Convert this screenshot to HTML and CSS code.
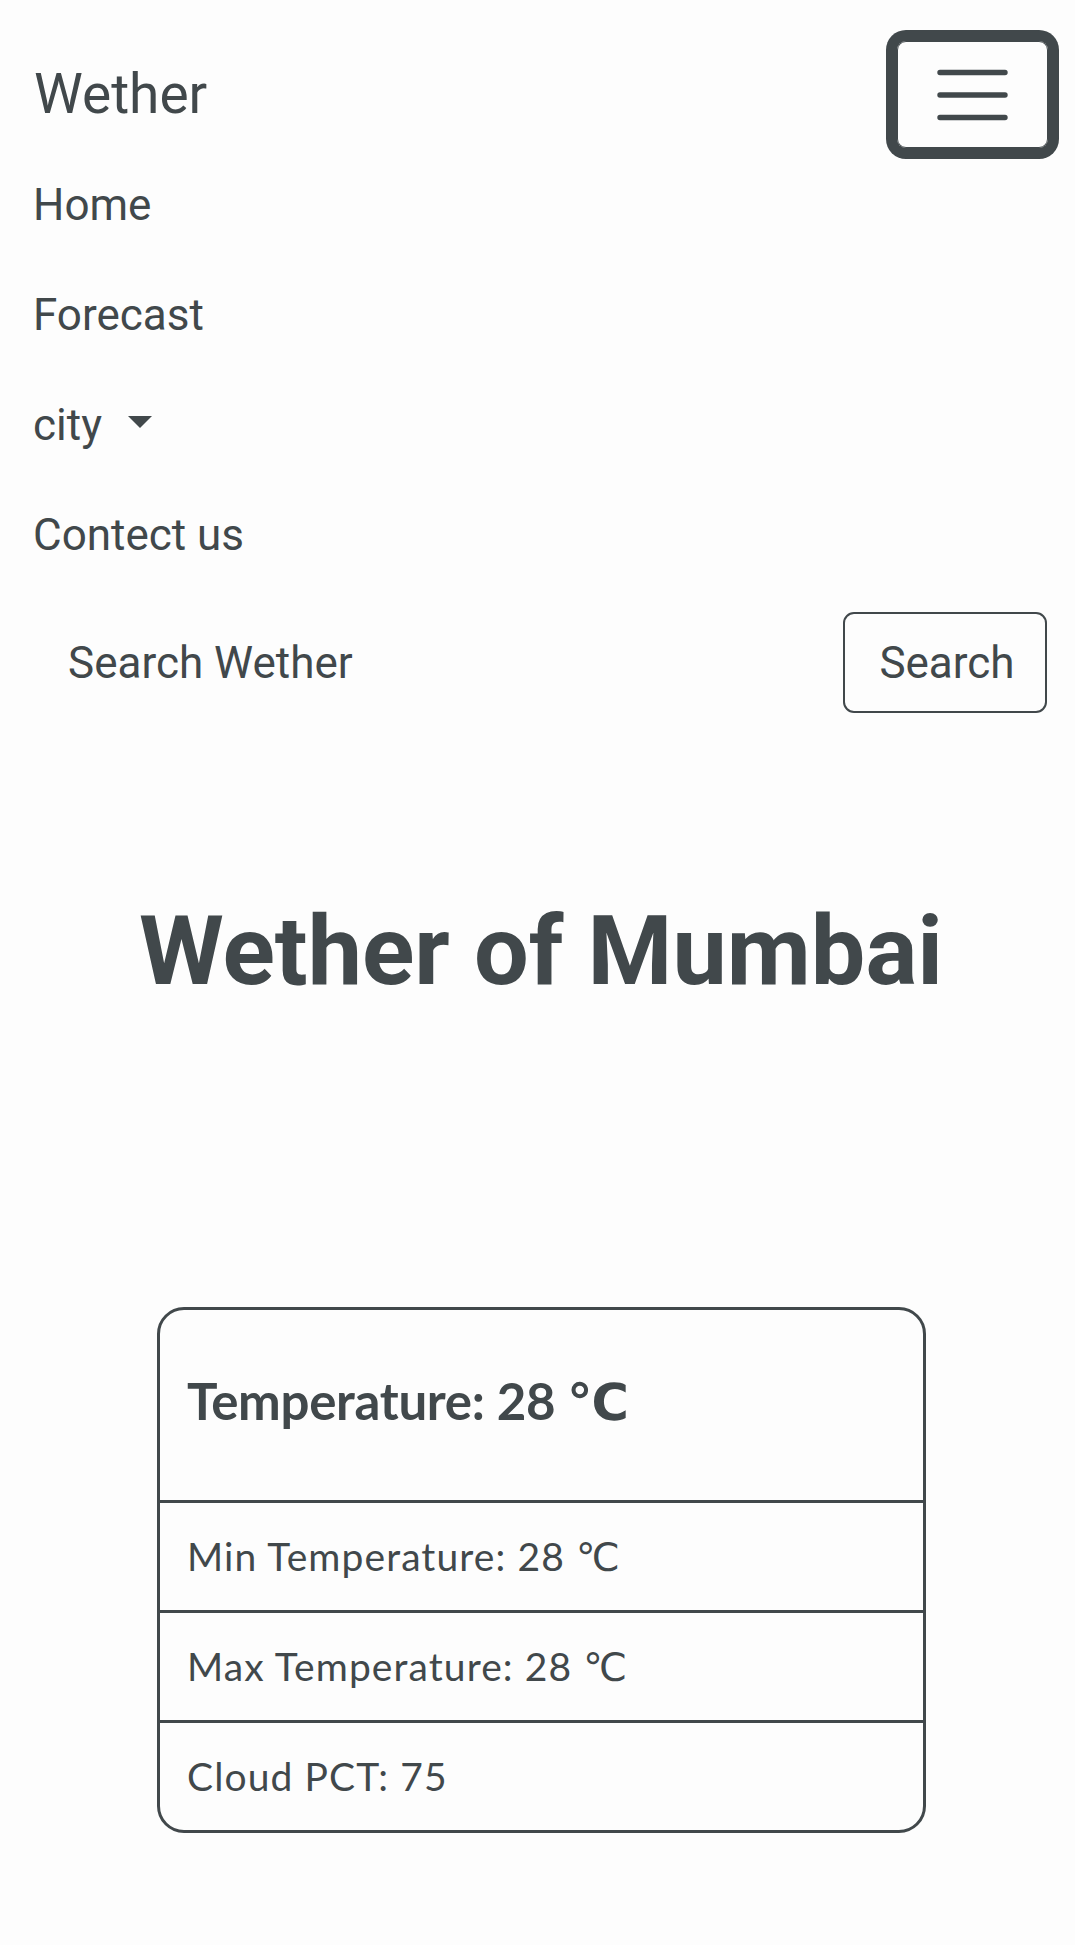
FILE: index.html
```html
<!DOCTYPE html>
<html lang="en">
<head>
<meta charset="utf-8">
<title>Wether</title>
<link rel="stylesheet" href="styles.css">
</head>
<body>
<nav class="navbar">
  <div class="navbar-top">
    <a class="brand" href="#">Wether</a>
    <button class="toggler" type="button" aria-label="Toggle navigation">
      <svg class="toggler-icon" width="84" height="84" viewBox="0 0 84 84">
        <path d="M10 19.5H75M10 42H75M10 64.5H75" stroke="#41484b" stroke-width="5.4" stroke-linecap="round" fill="none"/>
      </svg>
    </button>
  </div>
  <ul class="nav-list">
    <li><a class="nav-link" href="#">Home</a></li>
    <li><a class="nav-link" href="#">Forecast</a></li>
    <li><a class="nav-link" href="#">city<span class="caret"></span></a></li>
    <li><a class="nav-link" href="#">Contect us</a></li>
  </ul>
  <form class="search-form">
    <input class="search-input" type="search" placeholder="Search Wether">
    <button class="search-btn" type="button">Search</button>
  </form>
</nav>
<main>
  <h1 class="title">Wether of Mumbai</h1>
  <div class="card">
    <div class="card-body">
      <h5 class="card-title">Temperature: 28 ℃</h5>
    </div>
    <ul class="list">
      <li class="list-item">Min Temperature: 28 ℃</li>
      <li class="list-item">Max Temperature: 28 ℃</li>
      <li class="list-item">Cloud PCT: 75</li>
    </ul>
  </div>
</main>
</body>
</html>
```
FILE: styles.css
```css
html, body {
  margin: 0;
  padding: 0;
  background: #fdfdfd;
}
body {
  font-family: Roboto, "Liberation Sans", sans-serif;
  color: #41484b;
  min-height: 1945px;
}
a {
  color: inherit;
  text-decoration: none;
}
.navbar-top {
  display: flex;
  justify-content: space-between;
  align-items: center;
  margin-top: 41px;
  height: 107px;
  padding: 0 27px 0 34px;
}
.brand {
  font-size: 55px;
  line-height: 107px;
}
.toggler {
  box-sizing: border-box;
  width: 151px;
  height: 107px;
  border: 1px solid #41484b;
  border-radius: 9px;
  box-shadow: 0 0 0 11px #41484b;
  background: transparent;
  padding: 0;
  display: flex;
  align-items: center;
  justify-content: center;
}
.toggler-icon {
  display: block;
  margin-left: -2px;
}
.nav-list {
  list-style: none;
  margin: 0;
  padding: 2px 0 0 33px;
}
.nav-link {
  display: block;
  font-size: 44px;
  line-height: 110px;
}
.caret {
  display: inline-block;
  width: 0;
  height: 0;
  margin-left: 26px;
  border-top: 12px solid #41484b;
  border-left: 12px solid transparent;
  border-right: 12px solid transparent;
  vertical-align: 12px;
}
.search-form {
  display: flex;
  align-items: center;
  margin: 22px 28px 0 33px;
  height: 101px;
}
.search-input {
  flex: 1;
  min-width: 0;
  height: 101px;
  box-sizing: border-box;
  border: none;
  outline: none;
  background: transparent;
  padding: 0 0 0 35px;
  margin-right: 20px;
  font-family: Roboto, "Liberation Sans", sans-serif;
  font-size: 44px;
  color: #41484b;
}
.search-input::placeholder {
  color: #41484b;
  opacity: 1;
}
.search-btn {
  box-sizing: border-box;
  width: 204px;
  height: 101px;
  border: 2px solid #41484b;
  border-radius: 11px;
  background: transparent;
  font-family: Roboto, "Liberation Sans", sans-serif;
  font-size: 44px;
  color: #41484b;
  padding: 0 0 0 4px;
}
.title {
  margin: 180px 0 0;
  padding-left: 7px;
  text-align: center;
  font-size: 97px;
  line-height: 116px;
  font-weight: 700;
}
.card {
  width: 769px;
  box-sizing: border-box;
  margin: 298px 0 0 157px;
  border: 3px solid #41484b;
  border-radius: 27px;
  font-family: Lato, "DejaVu Sans", sans-serif;
}
.card-body {
  padding: 59px 27px 68px;
}
.card-title {
  margin: 0;
  font-size: 51px;
  line-height: 63px;
  font-weight: 700;
  letter-spacing: -0.3px;
}
.list {
  list-style: none;
  margin: 0;
  padding: 0;
}
.list-item {
  border-top: 3px solid #41484b;
  height: 107px;
  box-sizing: content-box;
  padding: 0 27px;
  font-size: 39px;
  line-height: 107px;
  letter-spacing: 1.1px;
}
```
